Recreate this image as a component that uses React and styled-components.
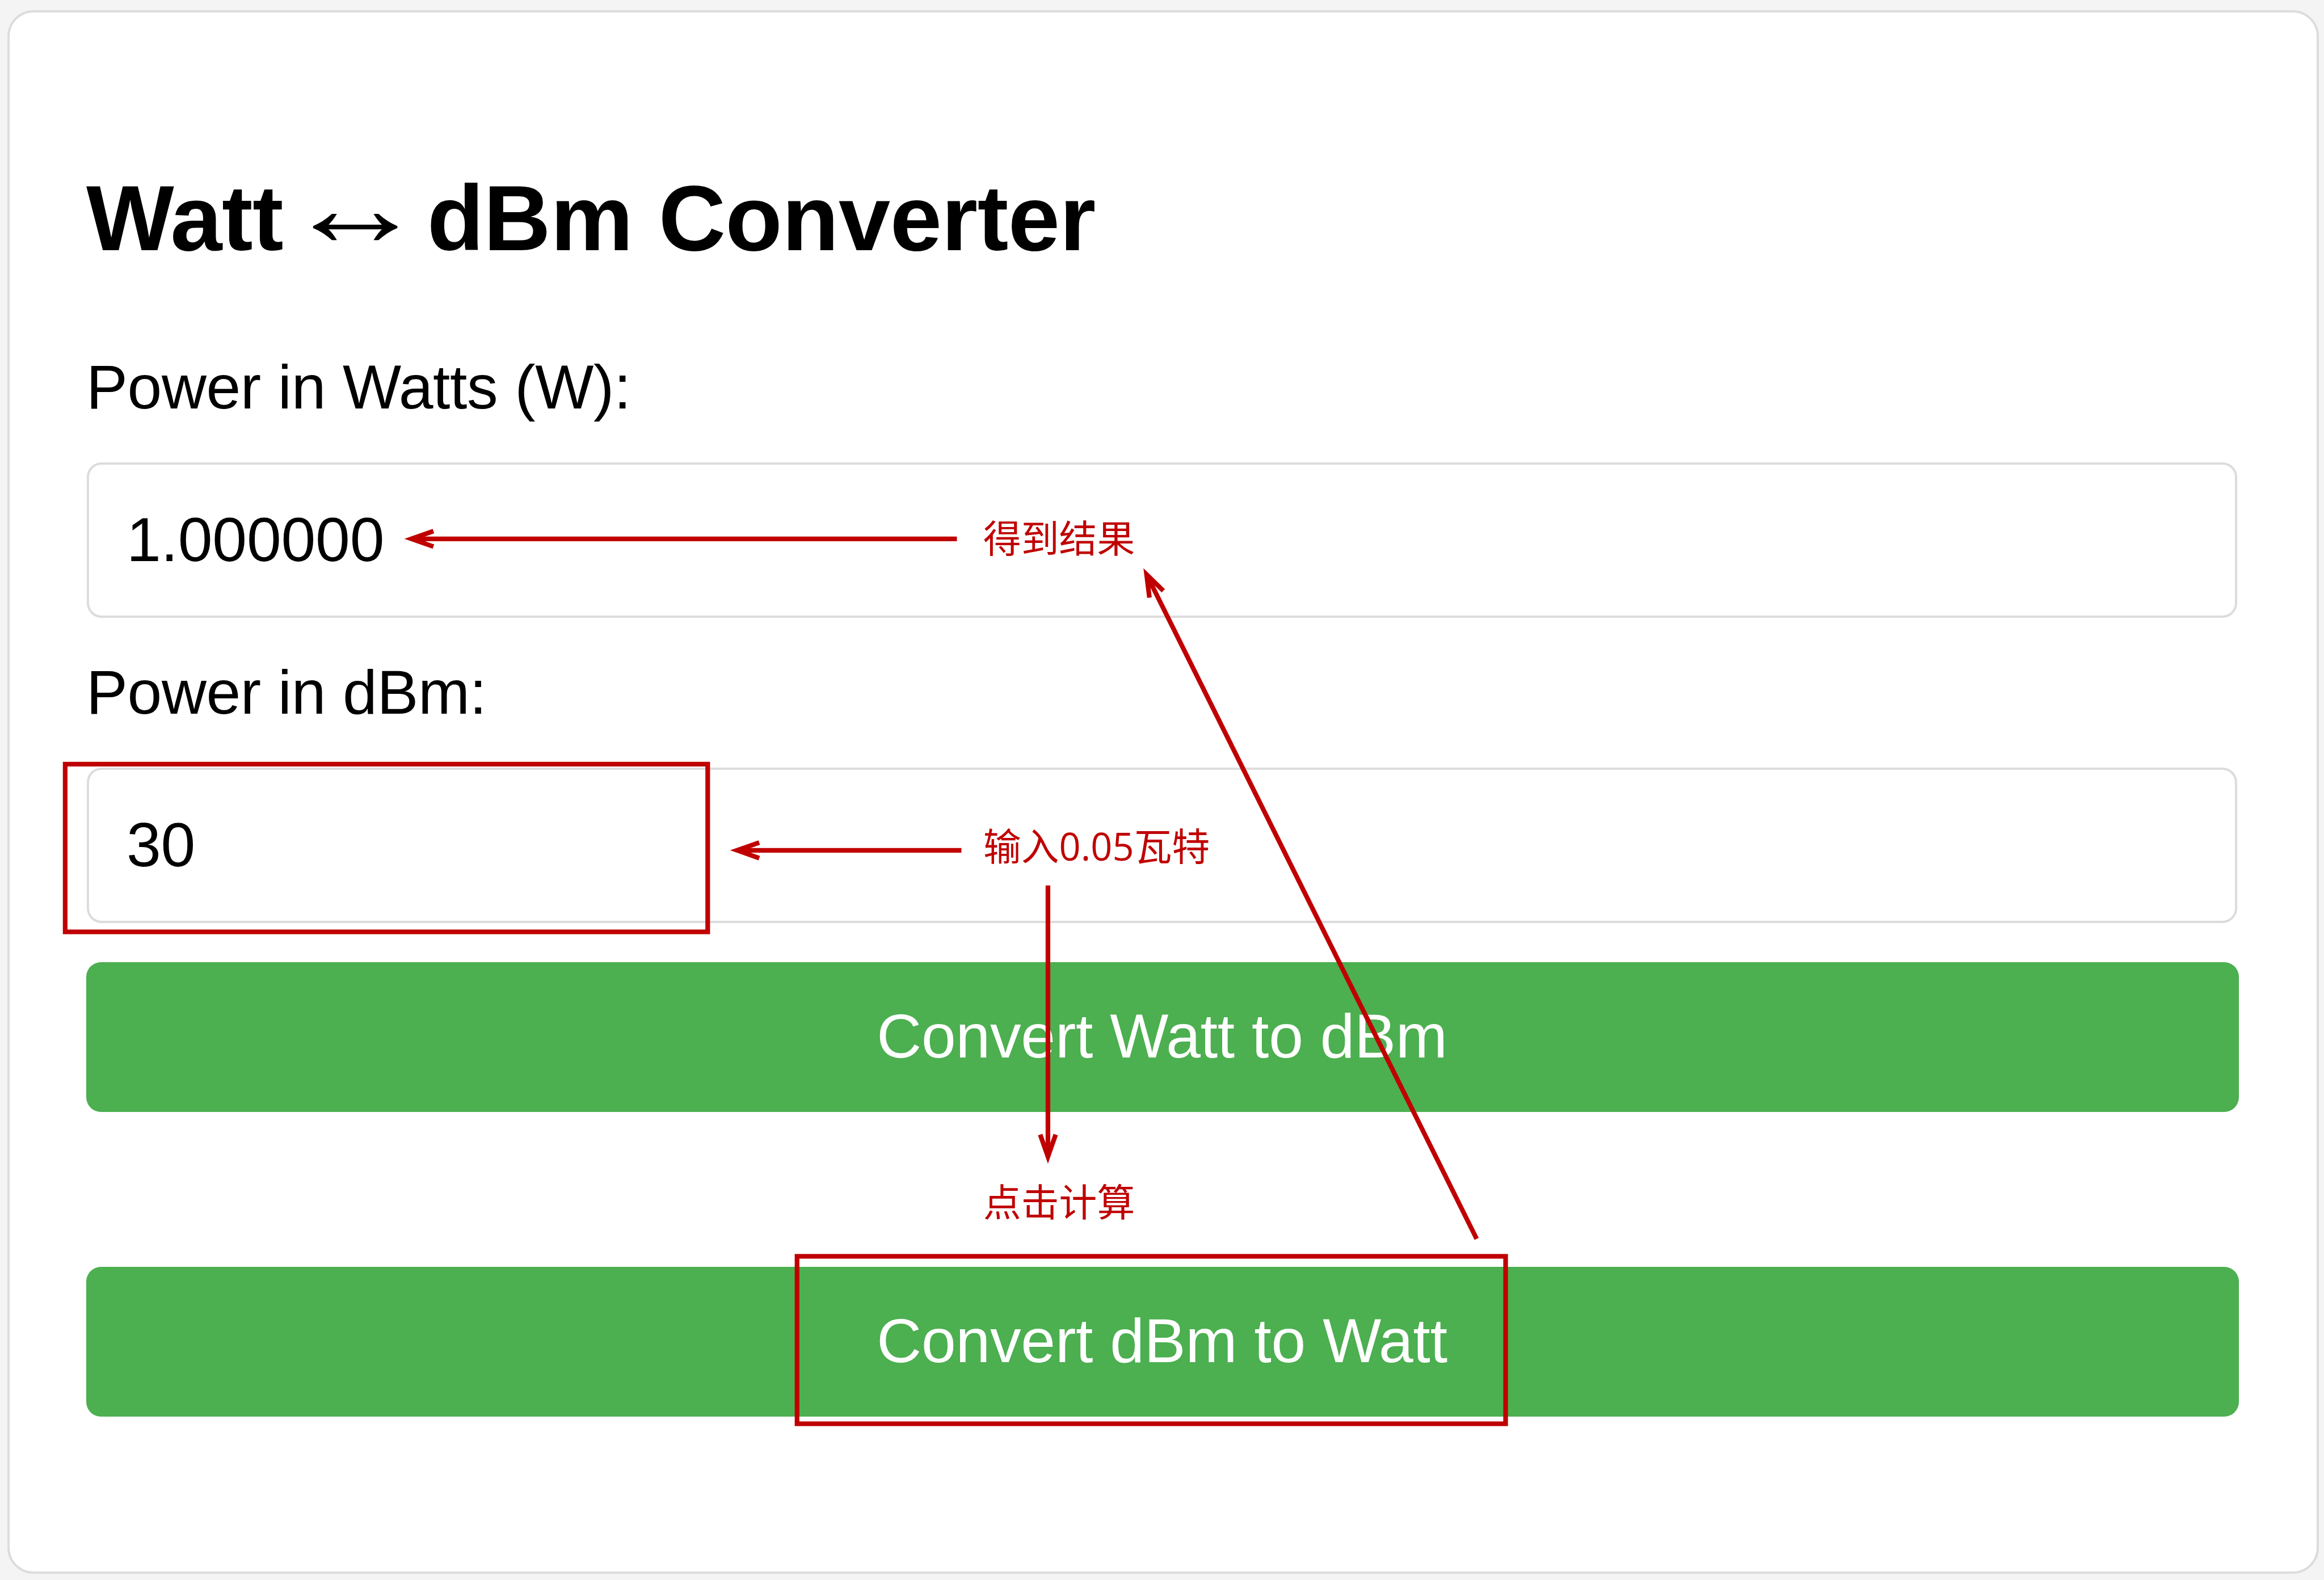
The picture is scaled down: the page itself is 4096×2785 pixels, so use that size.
import React, { useState } from "react";
import styled, { createGlobalStyle } from "styled-components";

const GlobalStyle = createGlobalStyle`
  body {
    margin: 0;
    background-color: #f4f4f4;
    font-family: "Liberation Sans", Arial, sans-serif;
    color: #000000;
  }
`;

const StyledPage = styled.main`
  position: relative;
  width: 4096px;
  height: 2785px;
  padding: 18px 9px 11px 13px;
  box-sizing: border-box;
  overflow: hidden;
`;

const StyledCard = styled.section`
  display: flex;
  flex-direction: column;
  height: 2756px;
  padding: 263px 137px 0 135px;
  border: 4px solid #dcdcdc;
  border-radius: 46px;
  background-color: #ffffff;
  box-sizing: border-box;
`;

const StyledTitle = styled.h2`
  display: flex;
  gap: 45px;
  margin: 0 0 137px;
  font-size: 164px;
  line-height: 200px;
  font-weight: 700;
  letter-spacing: -0.5px;
  white-space: nowrap;
`;

const StyledTitleArrow = styled.span`
  transform: translateY(-19px) scale(1.53, 1.2);
`;

const StyledField = styled.div`
  display: flex;
  flex-direction: column;
  gap: 73px;
  margin-bottom: ${({ $last }) => ($last ? "69px" : "71px")};
`;

const StyledLabel = styled.label`
  font-size: 109.3px;
  line-height: 120px;
  letter-spacing: -0.4px;
`;

const StyledInput = styled.input`
  width: 3790px;
  height: 274px;
  margin: 0 0 0 1px;
  padding: 0 64px 3px 66px;
  border: 4px solid #dcdcdc;
  border-radius: 26px;
  background-color: #ffffff;
  box-sizing: border-box;
  font-family: inherit;
  font-size: 109.3px;
  letter-spacing: -0.2px;
  color: #000000;
  outline: none;
`;

const StyledButton = styled.button`
  display: flex;
  align-items: center;
  justify-content: center;
  width: 3794px;
  height: 264px;
  margin: 0 0 273px;
  padding: 0 2px 4px 0;
  border: none;
  border-radius: 26px;
  background-color: #4caf50;
  font-family: inherit;
  font-size: 109.3px;
  line-height: 120px;
  letter-spacing: -0.25px;
  color: #ffffff;
`;

const StyledMarks = styled.svg`
  position: absolute;
  top: 0;
  left: 0;
  width: 4096px;
  height: 2785px;
  fill: none;
  stroke: #c00000;
  stroke-width: 8.3px;
  pointer-events: none;
`;

const StyledNote = styled.span`
  position: absolute;
  top: ${({ $top }) => $top}px;
  left: 1733px;
  font-family: "Open Sans", "Noto Sans CJK SC", sans-serif;
  font-size: 66.8px;
  line-height: 80px;
  color: #c00000;
  white-space: nowrap;
`;

function Arrow({ from, to }) {
   const dx = to[0] - from[0];
   const dy = to[1] - from[1];
   const length = Math.hypot(dx, dy);
   const angle = (Math.atan2(dy, dx) * 180) / Math.PI;

   return (
      <g transform={`translate(${from[0]} ${from[1]}) rotate(${angle})`}>
         <path d={`M0 0H${length - 13}`} />
         <path d={`M${length - 51.7} -13.8L${length - 12.4} 0L${length - 51.7} 13.8`} />
      </g>
   );
}

function App() {
   const [watts, setWatts] = useState("1.000000");
   const [dbm, setDbm] = useState("30");

   const convertToDbm = () => setDbm((10 * Math.log10(Number(watts) * 1000)).toFixed(2));
   const convertToWatts = () => setWatts((10 ** (Number(dbm) / 10) / 1000).toFixed(6));

   return (
      <StyledPage>
         <GlobalStyle />
         <StyledCard>
            <StyledTitle>
               <span>Watt</span>
               <StyledTitleArrow>↔</StyledTitleArrow>
               <span>dBm Converter</span>
            </StyledTitle>
            <StyledField>
               <StyledLabel htmlFor="watts">Power in Watts (W):</StyledLabel>
               <StyledInput id="watts" value={watts} onChange={(e) => setWatts(e.target.value)} />
            </StyledField>
            <StyledField $last>
               <StyledLabel htmlFor="dbm">Power in dBm:</StyledLabel>
               <StyledInput id="dbm" value={dbm} onChange={(e) => setDbm(e.target.value)} />
            </StyledField>
            <StyledButton type="button" onClick={convertToDbm}>Convert Watt to dBm</StyledButton>
            <StyledButton type="button" onClick={convertToWatts}>Convert dBm to Watt</StyledButton>
         </StyledCard>

         <StyledMarks viewBox="0 0 4136 2812">
            <rect x="116" y="1360" width="1143.5" height="298.5" />
            <rect x="1418.5" y="2236" width="1261" height="298" />
            <Arrow from={[1703, 959]} to={[719.7, 959]} />
            <Arrow from={[1711, 1513.4]} to={[1299.5, 1513.4]} />
            <Arrow from={[1865, 1576]} to={[1865, 2071]} />
            <Arrow from={[2628, 2205]} to={[2035, 1011.3]} />
         </StyledMarks>
         <StyledNote $top={909}>得到结果</StyledNote>
         <StyledNote $top={1452}>输入0.05瓦特</StyledNote>
         <StyledNote $top={2079}>点击计算</StyledNote>
      </StyledPage>
   );
}

export default App;
